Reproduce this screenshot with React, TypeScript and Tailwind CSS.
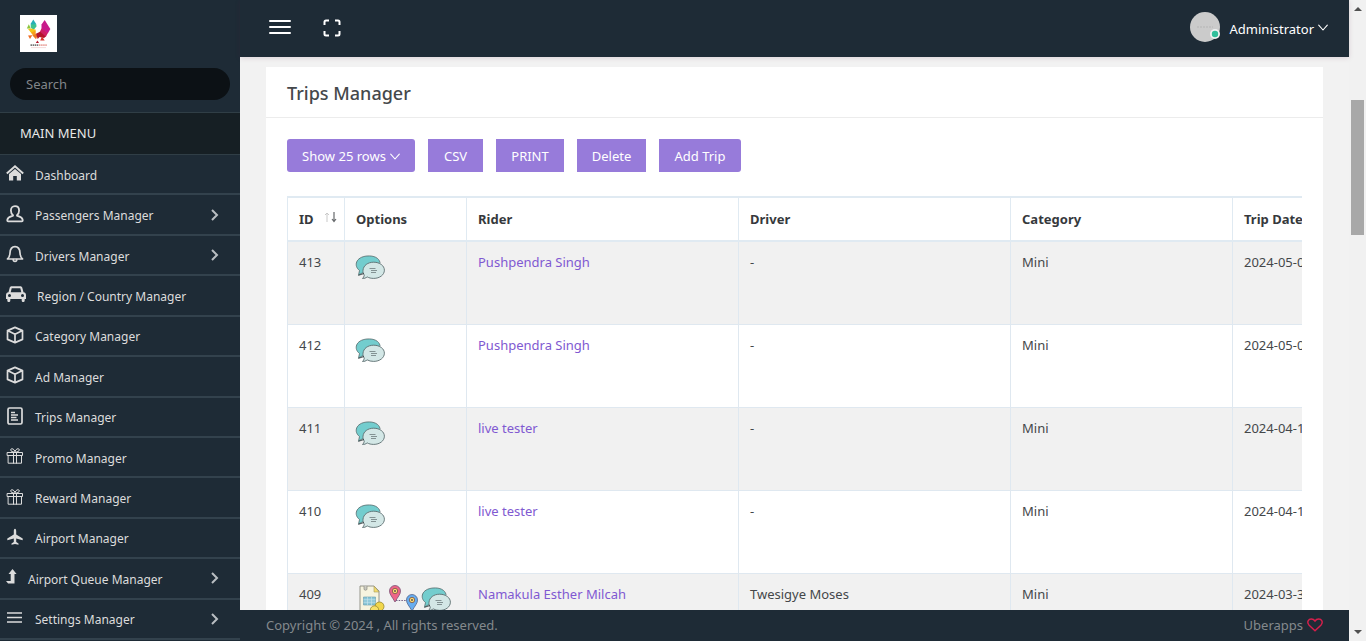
import type { ReactNode } from "react";

const stroke = { fill: "none", stroke: "currentColor", strokeLinecap: "round", strokeLinejoin: "round" } as const;

function HomeIcon() {
  return (
    <svg viewBox="0 0 18 18" className="size-[18px]">
      <path d="M.8 9.500 9 2.300l8.200 7.200" {...stroke} strokeWidth="2" strokeLinecap="butt" strokeLinejoin="miter" />
      <path d="M3 10 9 4.900l6 5.100v6.500h-4.200v-4.600H7.200v4.600H3z" fill="currentColor" />
    </svg>
  );
}

function PersonIcon() {
  return (
    <svg viewBox="0 0 18 18" className="size-[18px]">
      <path
        d="M9 1.200c2.600 0 4.100 1.800 4.100 4.300 0 2.100-.9 3.700-2.100 4.600v.6c1.500.7 5.200 1.100 5.700 4.200.1 1-.2 1.500-1 1.500H2.300c-.8 0-1.100-.5-1-1.500.5-3.100 4.200-3.500 5.700-4.200v-.6C5.800 9.200 4.900 7.600 4.900 5.500c0-2.500 1.500-4.300 4.100-4.300z"
        {...stroke}
        strokeWidth="1.800"
      />
    </svg>
  );
}

function BellIcon() {
  return (
    <svg viewBox="0 0 18 18" className="size-[18px]">
      <path d="M1.500 14c2-1.600 2.300-3.200 2.500-6C4.200 4.400 6 1.700 9 1.700S13.800 4.400 14 8c.2 2.800.5 4.400 2.500 6z" {...stroke} strokeWidth="1.700" />
      <path d="M7.200 14.500c0 2.600 3.600 2.600 3.600 0" {...stroke} strokeWidth="1.600" />
    </svg>
  );
}

function CarIcon() {
  return (
    <svg viewBox="0 0 20 18" className="h-[18px] w-5">
      <path
        fill="currentColor"
        fillRule="evenodd"
        d="M5.700 1.200h8.600c1 0 1.700.5 2 1.500l1.200 4.500c1.500.2 2.500 1.200 2.500 2.700v4.200h-1.300v1.300c0 2-3 2-3 0v-1.300H4.300v1.300c0 2-3 2-3 0v-1.300H0V9.900c0-1.500 1-2.500 2.500-2.700l1.200-4.500c.3-1 1-1.500 2-1.500zM5.700 3.300 4.700 7.200h10.600l-1-3.900zM3.500 9a1.500 1.500 0 1 0 0 3 1.500 1.500 0 0 0 0-3zm13 0a1.500 1.500 0 1 0 0 3 1.500 1.500 0 0 0 0-3z"
      />
    </svg>
  );
}

function BoxIcon() {
  return (
    <svg viewBox="0 0 18 18" className="size-[18px]">
      <path d="M9 1.400 16.500 4.600v8.800L9 16.600l-7.500-3.200V4.600zM1.500 4.600 9 8.200l7.500-3.600M9 8.200v8.400" {...stroke} strokeWidth="1.700" />
    </svg>
  );
}

function DocumentIcon() {
  return (
    <svg viewBox="0 0 18 18" className="size-[18px]">
      <rect x="2" y="1" width="14" height="16" rx="1.500" {...stroke} strokeWidth="1.700" />
      <path d="M5 5.500h4M5 8h7M5 10.500h5.500M5 13h7" {...stroke} strokeWidth="1.400" strokeLinecap="butt" />
    </svg>
  );
}

function GiftIcon() {
  return (
    <svg viewBox="0 0 18 18" className="size-[18px]">
      <path
        d="M1.500 5.500h15v3h-15zM2.500 8.500h13v7.700h-13zM7.500 5.500v10.700M10.500 5.500v10.700M8.500 5C7 5 4.500 4.500 4.700 2.700 5 1 8 1.500 9 4.500 10 1.500 13 1 13.300 2.700 13.500 4.500 11 5 9.500 5"
        {...stroke}
        strokeWidth="1"
      />
    </svg>
  );
}

function PlaneIcon() {
  return (
    <svg viewBox="0 0 18 18" className="size-[18px]">
      <path fill="currentColor" d="M9 .8c.8 0 1.200 1.200 1.200 2.500v3.200l6.500 4.100v1.600l-6.500-1.800v3.500l2.300 1.700v1.200L9 16l-3.500.8v-1.200l2.300-1.700v-3.500l-6.500 1.800v-1.600l6.500-4.100V3.300C7.800 2 8.200.8 9 .8z" />
    </svg>
  );
}

function LevelUpIcon() {
  return (
    <svg viewBox="0 0 11 18" className="h-[18px] w-[11px]">
      <path fill="currentColor" d="M6.500 1 10.600 6H8.500v9.500H2.100L0 13h4.700V6H2.500z" />
    </svg>
  );
}

function LinesIcon() {
  return (
    <svg viewBox="0 0 18 18" className="size-[18px]">
      <path d="M1 4h15M1 8.500h15M1 13h15" {...stroke} strokeWidth="1.700" strokeLinecap="butt" />
    </svg>
  );
}

function ChevronDown() {
  return (
    <svg viewBox="0 0 10 8" className="h-2 w-2.5">
      <path d="M.7 1.200 5 6l4.300-4.800" {...stroke} strokeWidth="1.100" />
    </svg>
  );
}

function Logo() {
  return (
    <svg viewBox="0 0 37 37" className="size-[37px] bg-white" role="img" aria-label="Uberapps">
      <path d="M13.300 4.500 16.200 9l-2.900 3.500-2.800-3.500z" fill="#25b0b6" />
      <path d="m10.700 9.500 5.600-.3.200 2.300-3 3.500-2.700-2.500z" fill="#3fc491" />
      <path d="m8.800 9.300 2 4.300h-4z" fill="#8cc63f" />
      <path d="m8 14 3.500-.5 4.300 1.200-.6 3L12 19z" fill="#f5c518" />
      <path d="m11.500 17.500 4-1.700.3 3.700-3 1.200z" fill="#f7a01e" />
      <path d="m8 20.500 4.300-.2L10 24z" fill="#ee6c23" />
      <path d="m12.500 20.500 3.800-2 1 2.800-1.300 3z" fill="#ee7a23" />
      <path d="M24.700 5 30.300 14l-2.500 4.500-6.300-4.300V9.500z" fill="#c81a8a" />
      <path d="m21.500 13.500 6.300 4.500-2 4-6.300-4.500z" fill="#cf1f63" />
      <path d="m16 18.800 4-2 5.800 4.700-1.800 1.500-4.500-1-1.800 2z" fill="#b3152b" />
      <path d="m22 21.500 2.700 4h-4.500z" fill="#d8322a" />
      <path d="m17.400 25.500 1.600 2.500h-3.200z" fill="#b3152b" />
      <path d="M10.500 30.200h8" stroke="#777" strokeWidth="1.800" strokeDasharray="1.500 .6" />
      <path d="M19 30.200h8" stroke="#e9a29c" strokeWidth="1.800" strokeDasharray="1.500 .6" />
      <path d="M11 32.600h15" stroke="#f1d0d0" strokeWidth=".8" />
    </svg>
  );
}

function ChatIcon() {
  return (
    <svg viewBox="0 0 30 26" className="h-[26px] w-[30px]">
      <path d="M4.500 15.500C-1.500 11 .5 2 12 1c7-.6 12 2 13 6.500L17 17.500 7 18l-3.500 2.200z" fill="#73cdce" stroke="#52696b" strokeWidth=".8" strokeLinejoin="round" />
      <path d="M18.700 7.200c6 0 10.700 3.500 10.700 8 0 4.600-4.700 8.200-10.700 8.200-2.600 0-4.700-.5-6.500-1.500-1.300 1-3 1.700-4.700 1.600 1-.8 1.600-2 1.800-3.300-1-1.500-1.500-3.300-1.300-5 .4-4.600 4.700-8 10.700-8z" fill="#d3e7e6" stroke="#5c6e70" strokeWidth=".9" />
      <path d="M14.500 13.500h6M16 15.500h6M16 17.500h5" stroke="#6e7c7e" strokeWidth=".8" />
      <path d="m9 18.500-5.500 1.800" stroke="#394446" strokeWidth=".9" />
    </svg>
  );
}

function InvoiceIcon() {
  return (
    <svg viewBox="0 0 28 28" className="size-7">
      <path d="M3 1h14l5 5v20H3z" fill="#f7f4df" stroke="#8b8b80" strokeWidth=".9" strokeLinejoin="round" />
      <path d="M17 1v6h5z" fill="#f4dc6a" stroke="#a59b62" strokeWidth=".6" />
      <path d="M7 1v3.500q1.500 1.500 3 0V1" fill="#c8c8c0" stroke="#8b8b80" strokeWidth=".7" />
      <path d="M6.500 12h12v8h-12z" fill="#8bc7d8" stroke="#669bad" strokeWidth=".6" />
      <path d="M6.500 14.700h12M6.500 17.300h12M10.500 12v8M14.500 12v8" stroke="#c9e6ee" strokeWidth=".6" />
      <circle cx="22.500" cy="21.500" r="4.500" fill="#f1d64b" stroke="#96862d" strokeWidth=".8" />
      <circle cx="17.500" cy="25" r="4.200" fill="#f6e06a" stroke="#96862d" strokeWidth=".8" />
    </svg>
  );
}

function RouteIcon() {
  return (
    <svg viewBox="0 0 30 28" className="h-7 w-[30px]">
      <path d="M7 17C4 11.500 1.500 9.500 1.500 6a5.500 5.500 0 0 1 11 0c0 3.500-2.500 5.500-5.500 11z" fill="#ee6688" stroke="#7c5277" strokeWidth=".8" />
      <circle cx="7" cy="6" r="2.700" fill="#fbd96f" stroke="#75524a" strokeWidth=".8" />
      <circle cx="7" cy="6" r=".9" fill="#4e4852" />
      <path d="M8 15.500h10" stroke="#735f86" strokeWidth="1" strokeDasharray="1.500 1.200" />
      <path d="M24 26c-3-5.500-5.500-7.500-5.500-11a5.500 5.500 0 0 1 11 0c0 3.500-2.500 5.500-5.500 11z" fill="#67adf0" stroke="#52658c" strokeWidth=".8" />
      <circle cx="24" cy="15" r="2.700" fill="#fbd96f" stroke="#75524a" strokeWidth=".8" />
      <circle cx="24" cy="15" r=".9" fill="#4e4852" />
    </svg>
  );
}

type Item = { label: string; icon: ReactNode; more?: boolean };

const items: Item[] = [
  { label: "Dashboard", icon: <HomeIcon /> },
  { label: "Passengers Manager", icon: <PersonIcon />, more: true },
  { label: "Drivers Manager", icon: <BellIcon />, more: true },
  { label: "Region / Country Manager", icon: <CarIcon /> },
  { label: "Category Manager", icon: <BoxIcon /> },
  { label: "Ad Manager", icon: <BoxIcon /> },
  { label: "Trips Manager", icon: <DocumentIcon /> },
  { label: "Promo Manager", icon: <GiftIcon /> },
  { label: "Reward Manager", icon: <GiftIcon /> },
  { label: "Airport Manager", icon: <PlaneIcon /> },
  { label: "Airport Queue Manager", icon: <LevelUpIcon />, more: true },
  { label: "Settings Manager", icon: <LinesIcon />, more: true },
];

const trips = [
  { id: 413, rider: "Pushpendra Singh", driver: "-", category: "Mini", date: "2024-05-01" },
  { id: 412, rider: "Pushpendra Singh", driver: "-", category: "Mini", date: "2024-05-01" },
  { id: 411, rider: "live tester", driver: "-", category: "Mini", date: "2024-04-17" },
  { id: 410, rider: "live tester", driver: "-", category: "Mini", date: "2024-04-17" },
  { id: 409, rider: "Namakula Esther Milcah", driver: "Twesigye Moses", category: "Mini", date: "2024-03-31", full: true },
];

function Sidebar() {
  return (
    <aside className="flex w-60 shrink-0 flex-col bg-[#1e2b36] pb-px text-[#dcdcdc]">
      <a href="#home" className="flex h-[57px] shrink-0 items-end px-5 pb-[5px]">
        <Logo />
      </a>
      <div className="shrink-0 px-2.5 pt-[11px] pb-3">
        <input
          type="search"
          aria-label="Search"
          placeholder="Search"
          className="h-8 w-full rounded-full bg-[#0c1115] px-4 text-[13px] text-white outline-none placeholder:text-[#828689]"
        />
      </div>
      <h2 className="flex h-[43px] shrink-0 items-center border-y border-[#303e46] bg-[#161f24] px-5 text-[13px] text-[#e8e8e8]">MAIN MENU</h2>
      <nav className="grid flex-1 auto-rows-fr">
        {items.map((item) => (
          <a key={item.label} href="#menu" className="flex min-h-10 items-center border-b-2 border-[#33424d] pt-0.5 pr-5 pl-1.5 text-[12px]">
            <span className="mr-[11px] pb-1">{item.icon}</span>
            <span className="flex-1 pt-px">{item.label}</span>
            {item.more && (
              <svg viewBox="0 0 10 12" className="mb-0.5 h-3 w-2.5 text-[#b9bec2]">
                <path d="m2 1 5 5-5 5" fill="none" stroke="currentColor" strokeWidth="2" />
              </svg>
            )}
          </a>
        ))}
      </nav>
    </aside>
  );
}

function Header() {
  return (
    <header className="z-10 flex h-[57px] shrink-0 items-center justify-between bg-[#1e2b36] pr-[21px] pb-[3px] pl-[29px] text-white shadow-[0_1px_5px_rgba(90,20,60,0.15)]">
      <div className="flex items-center gap-8">
        <button type="button" aria-label="Toggle menu">
          <svg viewBox="0 0 22 18" className="h-[18px] w-[22px]">
            <path d="M1 3h20M1 9h20M1 15h20" {...stroke} strokeWidth="2" />
          </svg>
        </button>
        <button type="button" aria-label="Full screen" className="pt-0.5">
          <svg viewBox="0 0 18 18" className="size-[18px]">
            <path d="M1.500 6V3q0-1.500 1.500-1.500h3M12 1.500h3q1.500 0 1.500 1.500v3M16.500 12v3q0 1.500-1.500 1.500h-3M6 16.500H3Q1.500 16.500 1.500 15v-3" {...stroke} strokeWidth="2" strokeLinecap="butt" />
          </svg>
        </button>
      </div>
      <button type="button" className="flex items-center gap-2.5 text-[13px]">
        <svg viewBox="0 0 30 30" className="size-[30px]">
          <circle cx="15" cy="15" r="15" fill="#cbcbcb" />
          <path d="M7 15h16" stroke="#b5b5b5" strokeDasharray="2 1" />
          <circle cx="25" cy="22" r="5" fill="#eef1f1" />
          <circle cx="25" cy="22" r="3.200" fill="#2fbf9b" />
        </svg>
        <span className="flex items-center gap-1 pt-1.5">
          Administrator
          <span className="pb-1">
            <ChevronDown />
          </span>
        </span>
      </button>
    </header>
  );
}

const action = "flex h-[33px] items-center justify-center bg-[#977bda] pt-0.5 text-[13px] text-white";
const th = "border border-t-2 border-b-2 border-[#e0eaf2] px-[11px] text-left font-bold";
const td = "border border-[#dfe8f0] px-[11px] pt-2.5 align-top";

function TripsTable() {
  return (
    <div className="overflow-hidden">
      <table className="w-[1217px] table-fixed border-collapse text-[13px] leading-5 text-[#44474a]">
        <colgroup>
          <col className="w-[57px]" />
          <col className="w-[122px]" />
          <col className="w-[272px]" />
          <col className="w-[272px]" />
          <col className="w-[222px]" />
          <col className="w-[272px]" />
        </colgroup>
        <thead className="text-[#36393c]">
          <tr className="h-11">
            <th className="border border-t-2 border-b-2 border-[#e0eaf2] pr-[7px] pl-[11px] text-left font-bold">
              <span className="flex items-center justify-between">
                ID
                <svg viewBox="0 0 13 12" className="mb-1 h-3 w-[13px]">
                  <path d="M3 11V2M1 4l2-2 2 2" fill="none" stroke="#c9c9c9" />
                  <path d="M10 1v9M8 8l2 2.500L12 8" fill="none" stroke="#66696c" strokeWidth="1.200" />
                </svg>
              </span>
            </th>
            <th className={th}>Options</th>
            <th className={th}>Rider</th>
            <th className={th}>Driver</th>
            <th className={th}>Category</th>
            <th className={th}>Trip Date</th>
          </tr>
        </thead>
        <tbody>
          {trips.map((trip) => (
            <tr key={trip.id} className="h-[83px] odd:bg-[#f1f1f1]">
              <td className={td}>{trip.id}</td>
              <td className="border border-[#dfe8f0] pt-[11px] pl-2.5 align-top">
                <div className="flex gap-[3px]">
                  {trip.full && (
                    <>
                      <a href="#invoice" aria-label="Invoice" className="ml-0.5">
                        <InvoiceIcon />
                      </a>
                      <a href="#route" aria-label="Route">
                        <RouteIcon />
                      </a>
                    </>
                  )}
                  <a href="#chat" aria-label="Chat" className="pt-0.5">
                    <ChatIcon />
                  </a>
                </div>
              </td>
              <td className={td}>
                <a href="#rider" className="text-[#8059d1]">{trip.rider}</a>
              </td>
              <td className={td}>{trip.driver}</td>
              <td className={td}>{trip.category}</td>
              <td className={td}>{trip.date}</td>
            </tr>
          ))}
        </tbody>
      </table>
    </div>
  );
}

function Scrollbar() {
  return (
    <div className="flex w-[17px] shrink-0 flex-col items-center justify-between bg-[#f1f1f1] py-[7px]" aria-hidden="true">
      <svg viewBox="0 0 8 4" className="h-1 w-2">
        <path d="M0 4 4 0l4 4z" fill="#505050" />
      </svg>
      <div className="flex w-[13px] flex-1 flex-col pt-[89px]">
        <div className="h-[135px] bg-[#a8a8a8]" />
      </div>
      <svg viewBox="0 0 8 4" className="h-1 w-2">
        <path d="M0 0h8L4 4z" fill="#505050" />
      </svg>
    </div>
  );
}

export default function App() {
  return (
    <div className="flex h-screen overflow-hidden bg-[#f2f2f2] font-['Noto_Sans','Open_Sans',sans-serif]">
      <Sidebar />
      <div className="flex min-w-0 flex-1 flex-col">
        <Header />
        <main className="min-h-0 flex-1 overflow-hidden px-[26px] pt-2.5">
          <section className="bg-white">
            <h1 className="flex h-[51px] items-center border-b border-[#ececec] px-[21px] pt-0.5 text-[18px] font-medium text-[#45484b]">Trips Manager</h1>
            <div className="px-[21px] pt-[21px]">
              <div className="mb-6 flex gap-[13px]">
                <button type="button" className={`${action} w-32 gap-1 rounded-[3px]`}>
                  Show 25 rows
                  <ChevronDown />
                </button>
                <button type="button" className={`${action} w-[55px]`}>CSV</button>
                <button type="button" className={`${action} w-[68px]`}>PRINT</button>
                <button type="button" className={`${action} w-[69px]`}>Delete</button>
                <button type="button" className={`${action} w-[82px] rounded-r-[3px]`}>Add Trip</button>
              </div>
              <TripsTable />
            </div>
          </section>
        </main>
        <footer className="z-10 flex h-[31px] shrink-0 items-center justify-between bg-[#1e2b36] px-[26px] text-[13px] text-[#84898d]">
          <span>Copyright © 2024 , All rights reserved.</span>
          <span className="flex items-center gap-1">
            Uberapps
            <svg viewBox="0 0 16 14" className="mb-0.5 h-3.5 w-4">
              <path d="M8 12.800 1.900 6.900C-.5 4 1.500 1 4.300 1 6 1 7.300 1.900 8 3c.7-1.100 2-2 3.700-2 2.800 0 4.800 3 2.400 5.900z" fill="none" stroke="#d81f4c" strokeWidth="1.400" />
            </svg>
          </span>
        </footer>
      </div>
      <Scrollbar />
    </div>
  );
}
